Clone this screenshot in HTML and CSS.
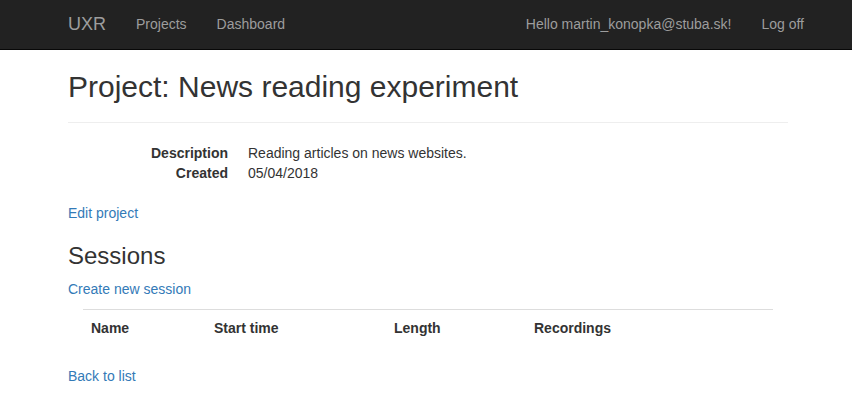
FILE: index.html
```html
<!DOCTYPE html>
<html>
<head>
<meta charset="utf-8">
<title>Project: News reading experiment</title>
<link rel="stylesheet" href="styles.css">
</head>
<body>
<header class="navbar">
  <div class="container nav-inner">
    <div class="nav-left">
      <a class="brand" href="#">UXR</a>
      <a class="nav-link" href="#">Projects</a>
      <a class="nav-link" href="#">Dashboard</a>
    </div>
    <div class="nav-right">
      <a class="nav-link" href="#">Hello martin_konopka@stuba.sk!</a>
      <a class="nav-link" href="#">Log off</a>
    </div>
  </div>
</header>
<main class="container body-content">
  <h2 class="title">Project: News reading experiment</h2>
  <hr class="rule">
  <dl class="details">
    <dt>Description</dt>
    <dd>Reading articles on news websites.</dd>
    <dt>Created</dt>
    <dd>05/04/2018</dd>
  </dl>
  <p class="para"><a class="link" href="#">Edit project</a></p>
  <h3 class="subtitle">Sessions</h3>
  <p class="para"><a class="link" href="#">Create new session</a></p>
  <table class="sessions">
    <tr>
      <th class="c-name">Name</th>
      <th class="c-start">Start time</th>
      <th class="c-length">Length</th>
      <th class="c-rec">Recordings</th>
    </tr>
  </table>
  <p class="para"><a class="link" href="#">Back to list</a></p>
</main>
</body>
</html>
```
FILE: styles.css
```css
* { box-sizing: border-box; }
html, body { margin: 0; padding: 0; }
body {
  font-family: "Liberation Sans", Arial, Helvetica, sans-serif;
  font-size: 14px;
  line-height: 20px;
  color: #333;
  background: #fff;
}
.container {
  width: 754px;
  margin: 0 auto;
  padding: 0 15px 0 19px;
}
.navbar {
  background: #222;
  border-bottom: 1px solid #080808;
  height: 50px;
}
.nav-inner {
  display: flex;
  justify-content: space-between;
  height: 49px;
}
.nav-left, .nav-right { display: flex; }
.nav-right { margin-right: -31px; }
.brand {
  font-size: 18px;
  line-height: 20px;
  padding: 14px 15px 15px 0;
  color: #9d9d9d;
  text-decoration: none;
}
.nav-link {
  color: #9d9d9d;
  text-decoration: none;
  padding: 14px 15px 15px;
  line-height: 20px;
}
.body-content { padding-bottom: 20px; }
.title {
  font-size: 30px;
  font-weight: 500;
  line-height: 33px;
  margin: 20px 0 0;
}
.rule {
  border: 0;
  border-top: 1px solid #eee;
  margin: 19px 0 20px;
}
.details {
  margin: 0 0 20px;
  display: grid;
  grid-template-columns: 160px 1fr;
  column-gap: 20px;
}
.details dt {
  font-weight: bold;
  text-align: right;
}
.details dd { margin: 0; }
.para { margin: 0 0 10px; }
.link { color: #337ab7; text-decoration: none; }
.subtitle {
  font-size: 24px;
  font-weight: 500;
  line-height: 26px;
  margin: 20px 0 10px;
}
.sessions {
  border-collapse: collapse;
  width: 690px;
  margin: 0 0 20px 15px;
}
.sessions th {
  text-align: left;
  font-weight: bold;
  padding: 8px;
  border-top: 1px solid #ddd;
  line-height: 20px;
}
.c-name { width: 123px; }
.c-start { width: 180px; }
.c-length { width: 140px; }
```
